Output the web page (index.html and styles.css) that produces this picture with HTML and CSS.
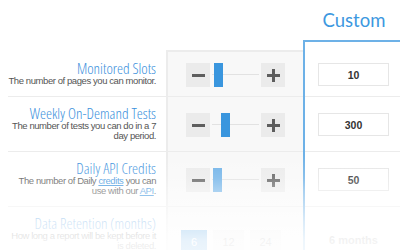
FILE: index.html
```html
<!DOCTYPE html>
<html>
<head>
<meta charset="utf-8">
<link rel="stylesheet" href="styles.css">
</head>
<body>
<div class="page">
  <div class="row head">
    <div class="cell c-label"></div>
    <div class="cell"></div>
    <div class="cell head-custom">Custom</div>
  </div>
  <div class="row cap">
    <div class="cell c-label"></div>
    <div class="cell cap-mid"></div>
    <div class="cell cap-custom"></div>
  </div>

  <div class="row">
    <div class="cell c-label sep">
      <div class="title">Monitored Slots</div>
      <div class="desc">The number of pages you can monitor.</div>
    </div>
    <div class="cell c-mid sep">
      <div class="slider">
        <span class="btn minus"></span>
        <span class="track"><span class="thumb" style="left:2px"></span></span>
        <span class="btn plus"></span>
      </div>
    </div>
    <div class="cell c-custom sep"><div class="val">10</div></div>
  </div>

  <div class="row">
    <div class="cell c-label sep">
      <div class="title">Weekly On-Demand Tests</div>
      <div class="desc">The number of tests you can do in a 7<br>day period.</div>
    </div>
    <div class="cell c-mid sep">
      <div class="slider">
        <span class="btn minus"></span>
        <span class="track"><span class="thumb" style="left:9px"></span></span>
        <span class="btn plus"></span>
      </div>
    </div>
    <div class="cell c-custom sep"><div class="val">300</div></div>
  </div>

  <div class="row">
    <div class="cell c-label sep">
      <div class="title">Daily API Credits</div>
      <div class="desc">The number of Daily <a href="#">credits</a> you can<br>use with our <a href="#">API</a>.</div>
    </div>
    <div class="cell c-mid sep">
      <div class="slider">
        <span class="btn minus"></span>
        <span class="track"><span class="thumb light" style="left:1px"></span></span>
        <span class="btn plus"></span>
      </div>
    </div>
    <div class="cell c-custom sep"><div class="val">50</div></div>
  </div>

  <div class="row last">
    <div class="cell c-label sep">
      <div class="title">Data Retention (months)</div>
      <div class="desc">How long a report will be kept before it<br>is deleted.</div>
    </div>
    <div class="cell c-mid sep">
      <div class="opts">
        <span class="opt on">6</span>
        <span class="opt wide">12</span>
        <span class="opt wide">24</span>
      </div>
    </div>
    <div class="cell c-custom sep"><div class="months">6 months</div></div>
  </div>

  <div class="fade"></div>
</div>
</body>
</html>
```

FILE: styles.css
```css
html, body {
  margin: 0;
  padding: 0;
  background: #fff;
}

.page {
  position: relative;
  width: 400px;
  height: 250px;
  overflow: hidden;
  padding-left: 8px;
  box-sizing: border-box;
  font-family: "Liberation Sans", Arial, sans-serif;
}

.row {
  display: grid;
  grid-template-columns: 158px 137px 101px;
  width: 396px;
}

.cell {
  box-sizing: border-box;
  display: flex;
  align-items: center;
  justify-content: center;
}

.head {
  height: 40px;
}

.head-custom {
  font-family: Lato, "Liberation Sans", sans-serif;
  font-size: 18.5px;
  color: #3d98e0;
  white-space: nowrap;
  padding-left: 1px;
}

.cap {
  height: 12px;
}

.cap-mid {
  margin-top: 10px;
  border-top: 2px solid #ececec;
  border-left: 2px solid #ececec;
  background: #f8f8f8;
}

.cap-custom {
  border: 2px solid #6db1e7;
  border-bottom: 0;
}

.sep {
  background-image: linear-gradient(#ececec, #ececec);
  background-repeat: no-repeat;
  background-position: left bottom;
  background-size: 100% 1px;
}

.c-label {
  display: block;
  text-align: right;
  padding: 8px 10px 11px 0;
}

.c-mid {
  border-left: 2px solid #ececec;
  background-color: #f8f8f8;
}

.c-custom {
  border-left: 2px solid #6db1e7;
  border-right: 2px solid #6db1e7;
}

.title {
  font-family: "Open Sans", sans-serif;
  font-stretch: 75%;
  font-weight: 300;
  font-size: 15.2px;
  line-height: 16px;
  color: #3a90dc;
  white-space: nowrap;
}

.desc {
  font-family: "Liberation Sans", Arial, sans-serif;
  font-size: 9.5px;
  letter-spacing: -0.42px;
  line-height: 10px;
  color: #555;
  white-space: nowrap;
}

.desc a {
  color: #3b93dc;
  text-decoration: underline;
}

.slider {
  display: flex;
  align-items: center;
  gap: 2px;
}

.btn {
  position: relative;
  width: 24px;
  height: 24px;
  background: #ebebeb;
}

.btn::before,
.plus::after {
  content: "";
  position: absolute;
  left: 6px;
  top: 11px;
  width: 13px;
  height: 3px;
  background: #5e5e5e;
}

.plus::after {
  left: 11px;
  top: 6px;
  width: 3px;
  height: 13px;
}

.track {
  position: relative;
  width: 47px;
  height: 24px;
  background: linear-gradient(#e2e2e2, #e2e2e2) left center / 100% 1px no-repeat;
}

.thumb {
  position: absolute;
  top: 0;
  width: 9px;
  height: 24px;
  background: #3a96de;
}

.thumb.light {
  background: #6fb2e8;
}

.val {
  width: 71px;
  height: 23px;
  box-sizing: border-box;
  border: 1px solid #e6e6e6;
  background: #fff;
  display: flex;
  align-items: center;
  justify-content: center;
  font-size: 10.5px;
  font-weight: bold;
  color: #333;
}

.last .c-label {
  padding-bottom: 22px;
}

.opts {
  display: flex;
  gap: 6px;
  margin-right: 9px;
  margin-top: 4px;
}

.opt {
  width: 26px;
  height: 24px;
  display: flex;
  align-items: center;
  justify-content: center;
  background: #ececec;
  color: #999;
  font-size: 11px;
}

.opt.wide {
  width: 31px;
}

.opt.on {
  background: #3a96de;
  color: #fff;
}

.months {
  font-size: 11px;
  font-weight: bold;
  color: #999;
}

.fade {
  position: absolute;
  left: 0;
  top: 0;
  width: 400px;
  height: 250px;
  pointer-events: none;
  background: linear-gradient(to bottom,
    rgba(255,255,255,0) 0px,
    rgba(255,255,255,0) 155px,
    rgba(255,255,255,0.2) 178px,
    rgba(255,255,255,0.4) 190px,
    rgba(255,255,255,0.75) 222px,
    rgba(255,255,255,0.88) 240px,
    rgba(255,255,255,0.9) 250px);
}
```
